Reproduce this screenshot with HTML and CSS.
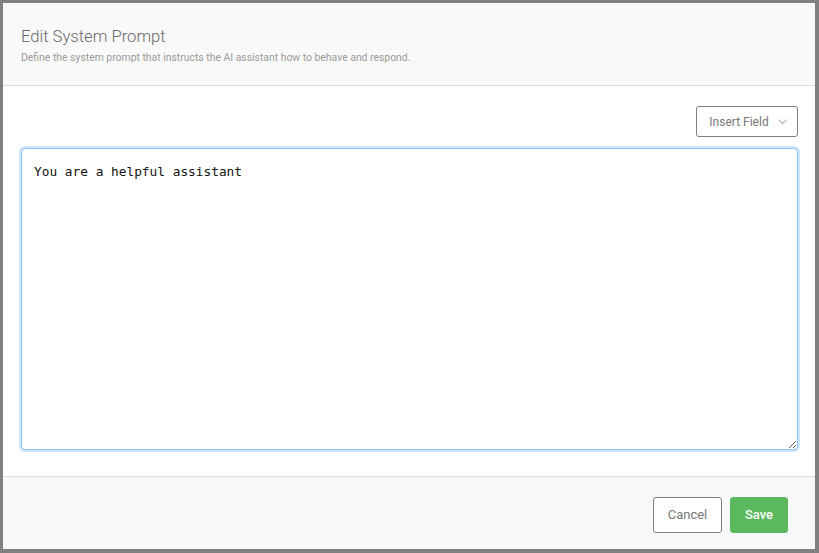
FILE: index.html
```html
<!DOCTYPE html>
<html lang="en">
<head>
  <meta charset="UTF-8" />
  <meta name="viewport" content="width=device-width, initial-scale=1.0" />
  <title>Edit System Prompt</title>
  <link rel="stylesheet" href="styles.css">
</head>
<body>
  <div class="modal">
    <div class="modal-header">
      <h1 class="modal-title">Edit System Prompt</h1>
      <p class="modal-subtitle">Define the system prompt that instructs the AI assistant how to behave and respond.</p>
    </div>

    <div class="modal-body">
      <div class="toolbar">
        <button class="btn btn-outline insert-btn" type="button">
          Insert Field
          <svg class="chevron" width="9" height="6" viewBox="0 0 9 6" fill="none">
            <path d="M0.5 0.8 L4.5 4.6 L8.5 0.8" stroke="#888" stroke-width="1"/>
          </svg>
        </button>
      </div>
      <textarea class="prompt-input" spellcheck="false">You are a helpful assistant</textarea>
    </div>

    <div class="modal-footer">
      <button class="btn btn-outline" type="button">Cancel</button>
      <button class="btn btn-save" type="button">Save</button>
    </div>
  </div>
</body>
</html>
```

FILE: styles.css
```css
* {
  box-sizing: border-box;
}
html, body {
  margin: 0;
  height: 100%;
}
body {
  font-family: Roboto, "Liberation Sans", Arial, sans-serif;
  background: #ffffff;
}
.modal {
  height: 100%;
  display: flex;
  flex-direction: column;
  border-style: solid;
  border-color: #808080;
  border-width: 3px 4px 4px 3px;
  background: #ffffff;
}

/* header */
.modal-header {
  background: #f9f9f9;
  border-bottom: 1px solid #dcdcdc;
  padding: 24px 18px 20px;
  height: 83px;
}
.modal-title {
  margin: 0;
  font-size: 16.6px;
  line-height: 20px;
  font-weight: 300;
  color: #6a6a6a;
}
.modal-subtitle {
  margin: 5px 0 0;
  font-size: 10.4px;
  line-height: 12px;
  color: #9a9a9a;
}

/* body */
.modal-body {
  flex: 1;
  display: flex;
  flex-direction: column;
  padding: 20px 17px 26px 18px;
}
.toolbar {
  display: flex;
  justify-content: flex-end;
  margin-bottom: 11px;
}
.btn {
  font-family: inherit;
  font-size: 12px;
  border-radius: 3px;
  cursor: pointer;
  display: inline-flex;
  align-items: center;
  justify-content: center;
}
.btn-outline {
  background: #ffffff;
  border: 1px solid #808080;
  color: #777777;
}
.insert-btn {
  width: 102px;
  height: 31px;
  gap: 9px;
  padding: 0 0 0 2px;
}
.chevron {
  margin-top: 1px;
}
.prompt-input {
  flex: 1;
  width: 100%;
  resize: vertical;
  font-family: "DejaVu Sans Mono", "Liberation Mono", monospace;
  font-size: 12.8px;
  line-height: 18px;
  color: #111111;
  padding: 14px 12px;
  border: 1px solid #8fc2f5;
  border-radius: 4px;
  box-shadow: 0 0 0 2px #cfe5fc;
  outline: none;
}

/* footer */
.modal-footer {
  background: #f7f8fa;
  border-top: 1px solid #dcdcdc;
  height: 73px;
  display: flex;
  justify-content: flex-end;
  align-items: flex-start;
  gap: 8px;
  padding: 20px 27px 0 0;
}
.modal-footer .btn {
  height: 36px;
  font-size: 13px;
  padding-bottom: 2px;
}
.modal-footer .btn-outline {
  width: 69px;
}
.btn-save {
  width: 58px;
  background: #5cb85c;
  border: 1px solid #5cb85c;
  color: #ffffff;
  font-weight: 500;
}
```
